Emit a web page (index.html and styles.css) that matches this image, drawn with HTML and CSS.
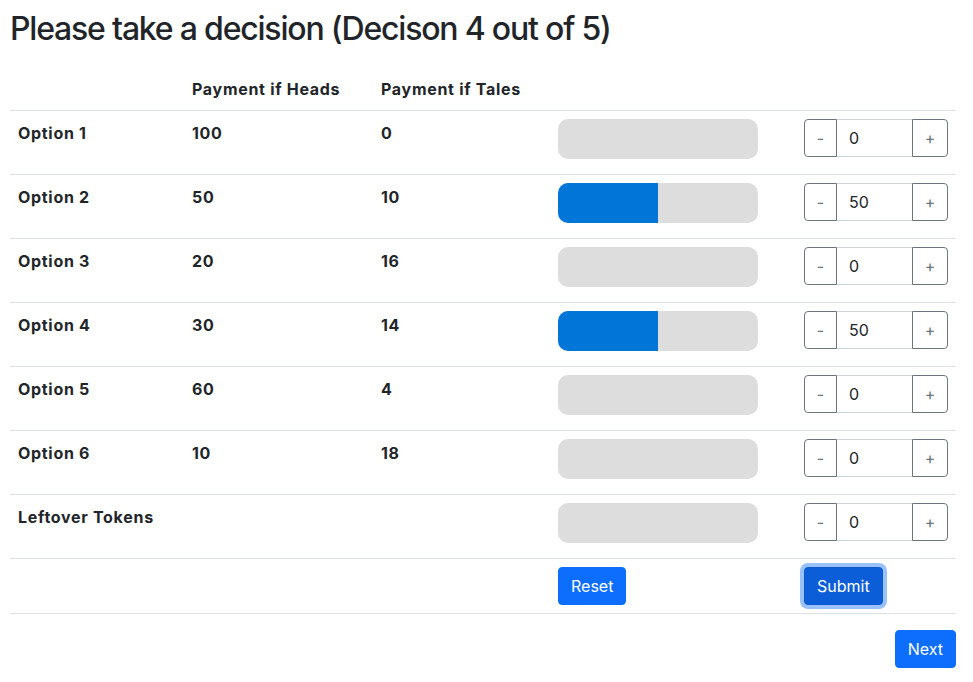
FILE: index.html
```html
<!DOCTYPE html>
<html lang="en">
<head>
<meta charset="utf-8">
<title>Decision</title>
<link rel="stylesheet" href="styles.css">
</head>
<body>
<div class="page">
  <h1 class="title">Please take a decision (Decison 4 out of 5)</h1>
  <table class="grid">
    <colgroup>
      <col class="c1"><col class="c2"><col class="c3"><col class="c4"><col class="c5">
    </colgroup>
    <thead>
      <tr><th></th><th>Payment if Heads</th><th>Payment if Tales</th><th></th><th></th></tr>
    </thead>
    <tbody>
      <tr>
        <td>Option 1</td><td>100</td><td>0</td>
        <td class="ctl"><div class="bar"><div class="fill" style="width:0%"></div></div></td>
        <td class="ctl"><div class="stepper"><button class="step minus">-</button><input class="val" value="0"><button class="step plus">+</button></div></td>
      </tr>
      <tr>
        <td>Option 2</td><td>50</td><td>10</td>
        <td class="ctl"><div class="bar"><div class="fill" style="width:50%"></div></div></td>
        <td class="ctl"><div class="stepper"><button class="step minus">-</button><input class="val" value="50"><button class="step plus">+</button></div></td>
      </tr>
      <tr>
        <td>Option 3</td><td>20</td><td>16</td>
        <td class="ctl"><div class="bar"><div class="fill" style="width:0%"></div></div></td>
        <td class="ctl"><div class="stepper"><button class="step minus">-</button><input class="val" value="0"><button class="step plus">+</button></div></td>
      </tr>
      <tr>
        <td>Option 4</td><td>30</td><td>14</td>
        <td class="ctl"><div class="bar"><div class="fill" style="width:50%"></div></div></td>
        <td class="ctl"><div class="stepper"><button class="step minus">-</button><input class="val" value="50"><button class="step plus">+</button></div></td>
      </tr>
      <tr>
        <td>Option 5</td><td>60</td><td>4</td>
        <td class="ctl"><div class="bar"><div class="fill" style="width:0%"></div></div></td>
        <td class="ctl"><div class="stepper"><button class="step minus">-</button><input class="val" value="0"><button class="step plus">+</button></div></td>
      </tr>
      <tr>
        <td>Option 6</td><td>10</td><td>18</td>
        <td class="ctl"><div class="bar"><div class="fill" style="width:0%"></div></div></td>
        <td class="ctl"><div class="stepper"><button class="step minus">-</button><input class="val" value="0"><button class="step plus">+</button></div></td>
      </tr>
      <tr>
        <td>Leftover Tokens</td><td></td><td></td>
        <td class="ctl"><div class="bar"><div class="fill" style="width:0%"></div></div></td>
        <td class="ctl"><div class="stepper"><button class="step minus">-</button><input class="val" value="0"><button class="step plus">+</button></div></td>
      </tr>
      <tr class="actions">
        <td></td><td></td><td></td>
        <td class="ctl"><button class="btn">Reset</button></td>
        <td class="ctl"><button class="btn focused">Submit</button></td>
      </tr>
    </tbody>
  </table>
  <div class="footer"><button class="btn">Next</button></div>
</div>
</body>
</html>
```
FILE: styles.css
```css
* { box-sizing: border-box; }
body {
  margin: 0;
  font-family: Inter, "Liberation Sans", sans-serif;
  font-size: 16px;
  line-height: 24px;
  color: #212529;
  background: #fff;
}
.page {
  width: 956px;
  padding: 10px 0 0 10px;
}
.title {
  margin: 0 0 22px;
  font-size: 32px;
  line-height: 38px;
  font-weight: 500;
  letter-spacing: -1.2px;
}
.grid {
  width: 946px;
  border-collapse: collapse;
  table-layout: fixed;
  margin-bottom: 16px;
}
.c1 { width: 174px; }
.c2 { width: 189px; }
.c3 { width: 177px; }
.c4 { width: 246px; }
.c5 { width: 160px; }
.grid th, .grid td {
  padding: 10px 8px 8px;
  text-align: left;
  vertical-align: top;
  font-weight: 700;
  letter-spacing: 0.7px;
  border-bottom: 1px solid #dee2e6;
}
.grid th { vertical-align: bottom; padding: 7px 8px 9px; }
.grid td.ctl { padding: 8px; letter-spacing: 0; }
.bar {
  width: 200px;
  height: 40px;
  margin-bottom: 7px;
  background: #dddddd;
  border-radius: 10px;
  overflow: hidden;
  display: flex;
}
.fill { background: #0275d8; height: 100%; }
.stepper {
  display: flex;
  width: 144px;
  height: 38px;
}
.step {
  font: inherit;
  font-weight: 400;
  color: #6c757d;
  background: #fff;
  border: 1px solid #6c757d;
  padding: 0;
  cursor: pointer;
}
.minus { width: 33px; border-radius: 4px 0 0 4px; }
.plus { width: 36px; border-radius: 0 4px 4px 0; }
.val {
  width: 75px;
  font: inherit;
  font-weight: 400;
  color: #212529;
  border: 1px solid #ced4da;
  border-left: none;
  border-right: none;
  padding: 0 12px;
  outline: none;
}
.btn {
  font: inherit;
  font-weight: 400;
  color: #fff;
  background: #0d6efd;
  border: 1px solid #0d6efd;
  border-radius: 4px;
  height: 38px;
  padding: 0 12px;
  cursor: pointer;
}
.btn.focused {
  background: #0b5ed7;
  border-color: #0a58ca;
  box-shadow: 0 0 0 4px rgba(49, 132, 253, 0.5);
}
.footer {
  display: flex;
  justify-content: flex-end;
  width: 946px;
}
```
